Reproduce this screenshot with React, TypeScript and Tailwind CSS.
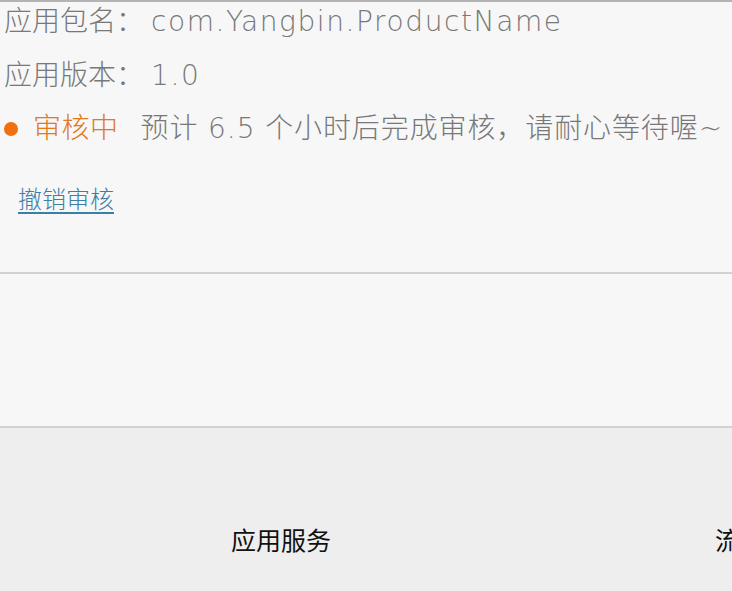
import React from "react";

export default function App() {
  const font = { fontFamily: '"DejaVu Sans", "Noto Sans CJK SC", sans-serif' };
  return (
    <div className="w-[732px] h-[591px] overflow-hidden bg-[#f7f7f7] flex flex-col" style={font}>
      <div className="h-[272px] border-t-2 border-[#b4b4b4] flex flex-col text-[#787878] text-[28px] font-light">
        <div className="h-[39px] flex items-center pl-[4px] whitespace-nowrap">
          <span>应用包名：</span>
          <span className="ml-[7px] tracking-[1.6px]">com.Yangbin.ProductName</span>
        </div>
        <div className="h-[69px] flex items-center pl-[4px] whitespace-nowrap">
          <span>应用版本：</span>
          <span className="ml-[7px] tracking-[1.6px]">1.0</span>
        </div>
        <div className="h-[38px] flex items-center pl-[4px] whitespace-nowrap">
          <span className="w-[14px] h-[14px] rounded-full bg-[#f07010] shrink-0" />
          <span className="ml-[15px] text-[#e07a1c] tracking-[0.5px]">审核中</span>
          <span className="ml-[22px] tracking-[0.9px]">预计 6.5 个小时后完成审核，请耐心等待喔~</span>
        </div>
        <div className="mt-[37px] h-[30px] flex items-center pl-[18px]">
          <span className="text-[24px] text-[#3b7ea6] underline underline-offset-[4px] decoration-[2px]">撤销审核</span>
        </div>
      </div>
      <div className="h-[156px] border-t-2 border-b-2 border-[#d2d2d2] bg-[#f7f7f7]" />
      <div className="flex-1 bg-[#eeeeee]">
        <div className="flex h-full items-center pt-[60px] whitespace-nowrap text-[25px] text-[#111]" style={{ fontFamily: '"Noto Sans CJK SC", sans-serif' }}>
          <span className="ml-[231px]">应用服务</span>
          <span className="ml-[384px]">流量统计</span>
        </div>
      </div>
    </div>
  );
}
